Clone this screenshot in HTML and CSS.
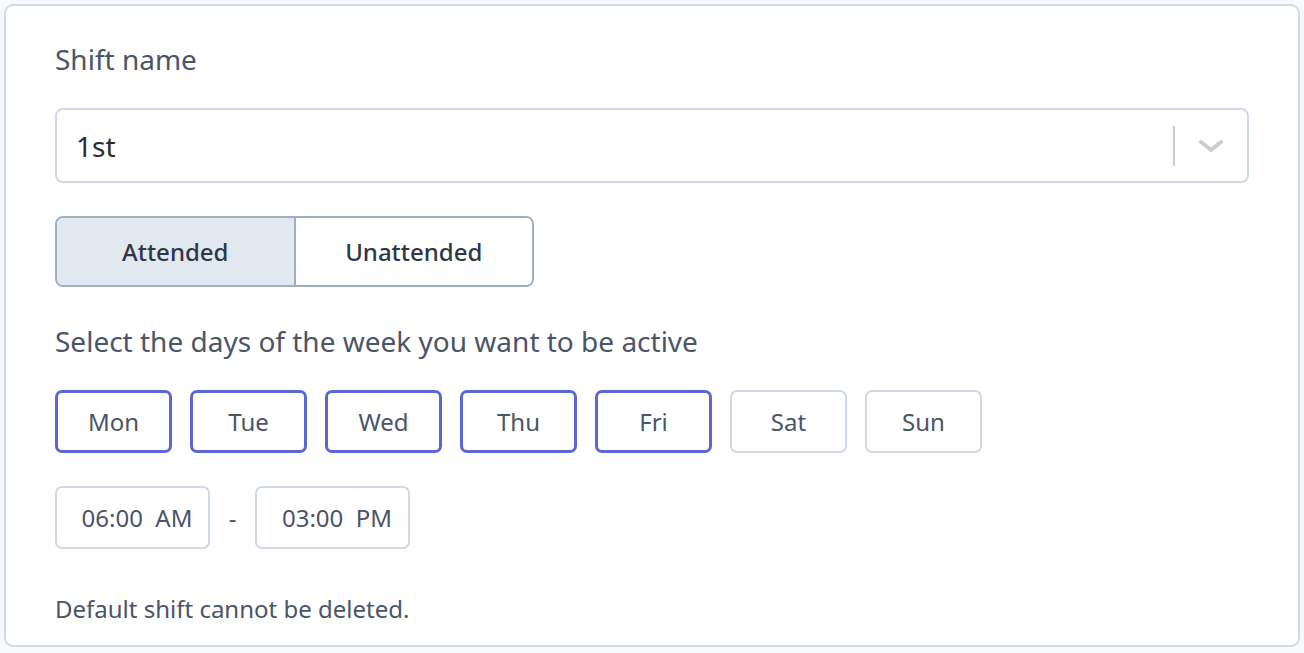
FILE: index.html
```html
<!DOCTYPE html>
<html>
<head>
<meta charset="utf-8">
<link rel="stylesheet" href="styles.css">
</head>
<body>
<div class="card">
  <div class="label">Shift name</div>
  <div class="select">
    <div class="select-value">1st</div>
    <div class="select-sep"></div>
    <div class="select-arrow">
      <svg width="26" height="14" viewBox="0 0 26 14"><polyline points="3,3 13,11 23,3" fill="none" stroke="#cccccc" stroke-width="4" stroke-linecap="round" stroke-linejoin="round"/></svg>
    </div>
  </div>
  <div class="toggle">
    <div class="toggle-opt active">Attended</div>
    <div class="toggle-opt">Unattended</div>
  </div>
  <div class="label days-label">Select the days of the week you want to be active</div>
  <div class="days">
    <div class="day on">Mon</div>
    <div class="day on">Tue</div>
    <div class="day on">Wed</div>
    <div class="day on">Thu</div>
    <div class="day on">Fri</div>
    <div class="day">Sat</div>
    <div class="day">Sun</div>
  </div>
  <div class="times">
    <div class="time">06:00&nbsp;&nbsp;AM</div>
    <div class="dash">-</div>
    <div class="time">03:00&nbsp;&nbsp;PM</div>
  </div>
  <div class="note">Default shift cannot be deleted.</div>
</div>
</body>
</html>
```
FILE: styles.css
```css
html, body {
  margin: 0;
  padding: 0;
  background: #f7f9fc;
  font-family: "Noto Sans", "Open Sans", sans-serif;
}
body {
  padding: 4px 4px 0 4px;
}
.card {
  box-sizing: border-box;
  width: 1296px;
  height: 643px;
  background: #fff;
  border: 2px solid #d3dbe5;
  border-radius: 9px;
  padding: 35px 49px 0 49px;
}
.label {
  font-size: 28px;
  line-height: 36px;
  color: #4a5568;
}
.select {
  box-sizing: border-box;
  margin-top: 31px;
  height: 75px;
  border: 2px solid #d0d9e4;
  border-radius: 8px;
  display: flex;
  align-items: center;
}
.select-value {
  flex: 1;
  padding-left: 19px;
  font-size: 28px;
  color: #2b2b2b;
}
.select-sep {
  width: 2px;
  height: 40px;
  background: #cccccc;
}
.select-arrow {
  width: 72px;
  display: flex;
  justify-content: center;
  align-items: center;
}
.toggle {
  box-sizing: border-box;
  margin-top: 33px;
  width: 479px;
  height: 71px;
  display: flex;
  border: 2px solid #a0aec0;
  border-radius: 8px;
  overflow: hidden;
}
.toggle-opt {
  flex: 1;
  display: flex;
  align-items: center;
  justify-content: center;
  font-size: 24px;
  font-weight: 500;
  color: #2d3748;
  background: #fff;
}
.toggle-opt.active {
  background: #e2e8f0;
  border-right: 2px solid #a0aec0;
}
.days-label {
  margin-top: 36px;
}
.days {
  margin-top: 31px;
  display: flex;
  gap: 18px;
}
.day {
  box-sizing: border-box;
  width: 117px;
  height: 63px;
  border: 2px solid #d0d9e4;
  border-radius: 7px;
  display: flex;
  align-items: center;
  justify-content: center;
  font-size: 24px;
  color: #4a5568;
}
.day.on {
  border: 3px solid #5a67d5;
}
.times {
  margin-top: 33px;
  display: flex;
  align-items: center;
}
.time {
  box-sizing: border-box;
  width: 155px;
  height: 63px;
  border: 2px solid #d0d9e4;
  border-radius: 7px;
  display: flex;
  align-items: center;
  justify-content: center;
  padding-left: 9px;
  font-size: 24px;
  color: #4a5568;
}
.dash {
  width: 45px;
  text-align: center;
  font-size: 24px;
  color: #4a5568;
}
.note {
  margin-top: 45px;
  font-size: 24px;
  line-height: 30px;
  color: #4a5568;
}
```
